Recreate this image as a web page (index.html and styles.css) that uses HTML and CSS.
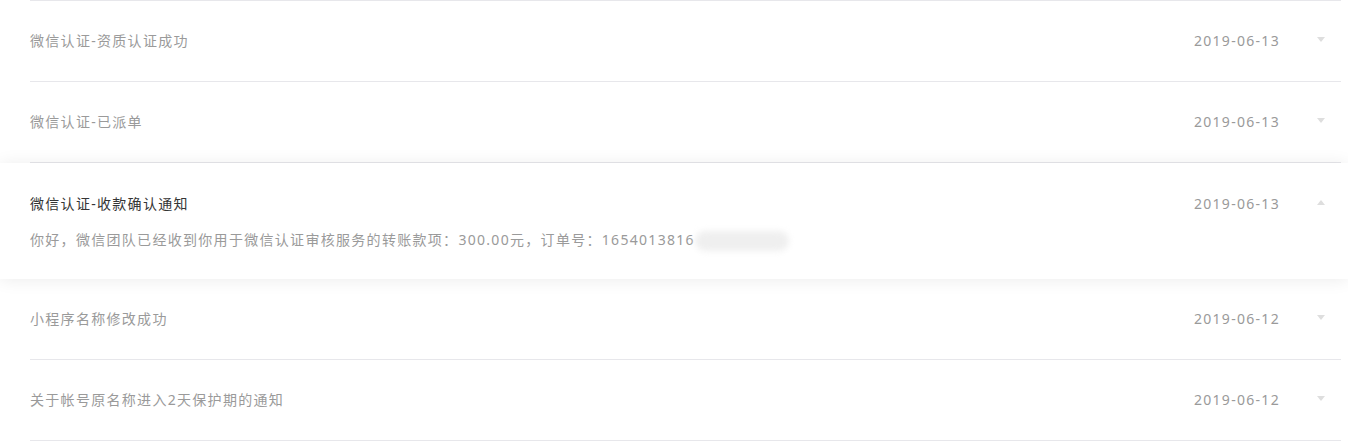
FILE: index.html
```html
<!DOCTYPE html>
<html lang="zh-CN">
<head>
    <meta charset="UTF-8">
    <title>消息通知</title>
    <link rel="stylesheet" href="styles.css">
</head>
<body>
    <ul class="msg-list">
        <li class="msg-item">
            <div class="msg-head">
                <span class="msg-title">微信认证-资质认证成功</span>
                <span class="msg-date">2019-06-13</span>
                <i class="msg-arrow"></i>
            </div>
        </li>
        <li class="msg-item">
            <div class="msg-head">
                <span class="msg-title">微信认证-已派单</span>
                <span class="msg-date">2019-06-13</span>
                <i class="msg-arrow"></i>
            </div>
        </li>
        <li class="msg-item is-open">
            <div class="msg-head">
                <span class="msg-title">微信认证-收款确认通知</span>
                <span class="msg-date">2019-06-13</span>
                <i class="msg-arrow"></i>
            </div>
            <p class="msg-body">你好，微信团队已经收到你用于微信认证审核服务的转账款项：300.00元，订单号：1654013816<span class="msg-mask"></span></p>
        </li>
        <li class="msg-item">
            <div class="msg-head">
                <span class="msg-title">小程序名称修改成功</span>
                <span class="msg-date">2019-06-12</span>
                <i class="msg-arrow"></i>
            </div>
        </li>
        <li class="msg-item">
            <div class="msg-head">
                <span class="msg-title">关于帐号原名称进入2天保护期的通知</span>
                <span class="msg-date">2019-06-12</span>
                <i class="msg-arrow"></i>
            </div>
        </li>
    </ul>
</body>
</html>
```

FILE: styles.css
```css
* {
    margin: 0;
    padding: 0;
    box-sizing: border-box;
}

body {
    background: #fff;
    font-family: "Noto Sans", "Noto Sans CJK SC", sans-serif;
    font-size: 14px;
    letter-spacing: 1.3px;
    color: #9a9a9a;
    overflow: hidden;
}

/* message list */
.msg-list {
    list-style: none;
    margin: 0 7px 0 30px;
    border-top: 1px solid #e7e7eb;
}

.msg-item {
    border-bottom: 1px solid #e7e7eb;
}

.msg-head {
    display: flex;
    align-items: center;
    padding: 30px 0;
    line-height: 20px;
}

.msg-title {
    flex: 1;
}

.msg-date {
    margin-right: 21px;
}

.msg-arrow {
    display: flex;
    justify-content: center;
    width: 40px;
    margin-top: -4px;
}

.msg-arrow::before {
    content: "";
    border-left: 4px solid transparent;
    border-right: 4px solid transparent;
    border-top: 5px solid #dedede;
}

/* expanded item */
.msg-item.is-open {
    position: relative;
    margin: 0 -7px 0 -30px;
    padding: 0 7px 28px 30px;
    border-bottom: none;
    box-shadow: 0 1px 16px rgba(0, 0, 0, 0.08);
}

.is-open .msg-head {
    padding: 31px 0 0;
}

.is-open .msg-title {
    color: #353535;
}

.is-open .msg-arrow::before {
    border-top: none;
    border-bottom: 5px solid #dedede;
}

.msg-body {
    margin-top: 16px;
    line-height: 20px;
}

.msg-mask {
    display: inline-block;
    width: 94px;
    height: 20px;
    vertical-align: middle;
    border-radius: 10px;
    background: #efefef;
    filter: blur(3px);
}
```
